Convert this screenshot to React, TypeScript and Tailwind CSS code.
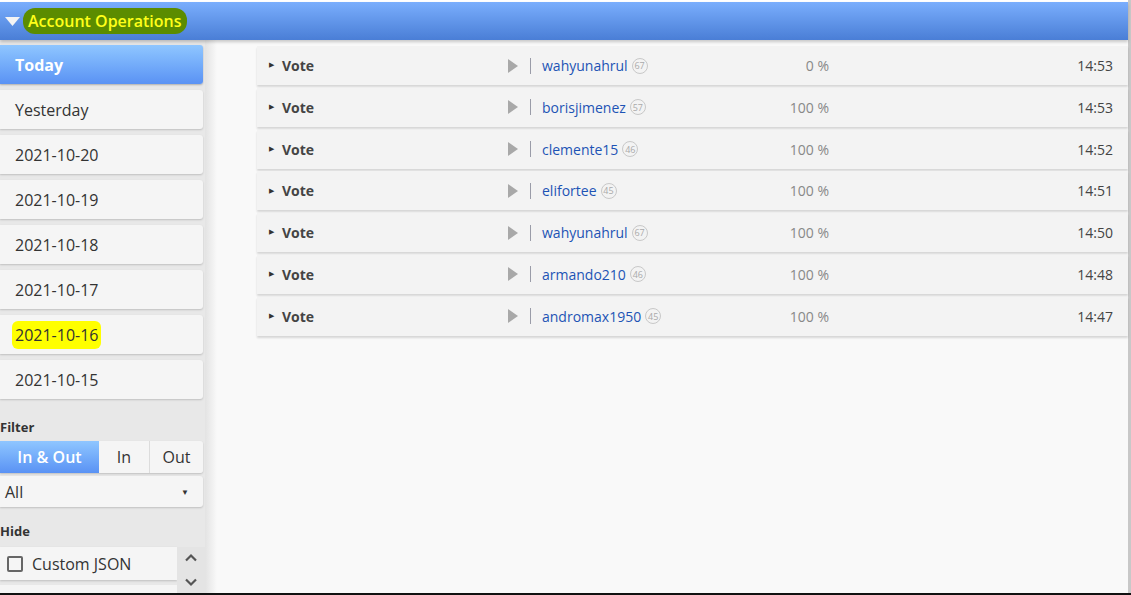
import React from 'react';

const days = ['Today', 'Yesterday', '2021-10-20', '2021-10-19', '2021-10-18', '2021-10-17', '2021-10-16', '2021-10-15'];

const ops = [
  { user: 'wahyunahrul', rep: '67', pct: '0 %', time: '14:53' },
  { user: 'borisjimenez', rep: '57', pct: '100 %', time: '14:53' },
  { user: 'clemente15', rep: '46', pct: '100 %', time: '14:52' },
  { user: 'elifortee', rep: '45', pct: '100 %', time: '14:51' },
  { user: 'wahyunahrul', rep: '67', pct: '100 %', time: '14:50' },
  { user: 'armando210', rep: '46', pct: '100 %', time: '14:48' },
  { user: 'andromax1950', rep: '45', pct: '100 %', time: '14:47' },
];

function Sidebar() {
  return (
    <div className="w-[205px] shrink-0 bg-[#e8e8e8] pt-[5px] flex flex-col overflow-hidden">
      <div className="flex flex-col gap-[6px] w-[203px] shrink-0">
        {days.map((d, i) =>
          i === 0 ? (
            <div
              key={d}
              className="h-[39px] flex items-center pl-[15px] rounded-r-[3px] bg-gradient-to-b from-[#8fc6ff] to-[#5a92f4] text-white font-bold text-[16px] shadow-[0_1px_2px_rgba(0,0,0,0.25)]"
            >
              {d}
            </div>
          ) : (
            <div
              key={d}
              className="h-[39px] flex items-center pl-[15px] rounded-r-[3px] bg-[#f5f5f5] text-[#333] text-[16px] shadow-[0_1px_2px_rgba(0,0,0,0.18)]"
            >
              {d === '2021-10-16' ? (
                <span className="bg-[#ffff00] -ml-[3px] px-[3px] py-[2px] rounded-[6px]">{d}</span>
              ) : (
                d
              )}
            </div>
          )
        )}
      </div>

      <div className="shrink-0 mt-[22px] text-[13px] font-bold text-[#333] leading-none">Filter</div>
      <div className="shrink-0 mt-[7px] flex h-[32px] w-[203px] rounded-r-[3px] overflow-hidden shadow-[0_1px_2px_rgba(0,0,0,0.18)] text-[16px]">
        <div className="w-[99px] flex items-center justify-center bg-gradient-to-b from-[#8fc6ff] to-[#5a92f4] text-white font-semibold">
          In &amp; Out
        </div>
        <div className="w-[51px] flex items-center justify-center bg-[#f5f5f5] text-[#333] border-r border-[#dcdcdc]">In</div>
        <div className="flex-1 flex items-center justify-center bg-[#f5f5f5] text-[#333]">Out</div>
      </div>
      <div className="shrink-0 mt-[3px] h-[31px] w-[203px] flex items-center justify-between pl-[5px] pr-[14px] bg-[#f5f5f5] rounded-r-[3px] shadow-[0_1px_2px_rgba(0,0,0,0.18)] text-[16px] text-[#333]">
        <span>All</span>
        <span className="text-[8px]">▼</span>
      </div>

      <div className="shrink-0 mt-[18px] text-[13px] font-bold text-[#333] leading-none">Hide</div>
      <div className="shrink-0 mt-[9px] flex">
        <div className="w-[177px] flex flex-col gap-[5px]">
          <div className="h-[33px] flex items-center pl-[7px] bg-[#f5f5f5] shadow-[0_1px_2px_rgba(0,0,0,0.18)] text-[16px] text-[#333]">
            <span className="w-[16px] h-[16px] border-2 border-[#666] rounded-[2px] mr-[9px]" />
            Custom JSON
          </div>
          <div className="h-[33px] bg-[#f5f5f5]" />
        </div>
        <div className="w-[28px] h-[46px] bg-[#e4e4e4] flex flex-col items-center justify-between py-[6px]">
          <svg width="14" height="9" viewBox="0 0 14 9" fill="none" stroke="#555" strokeWidth="2.2">
            <path d="M2 7.5 L7 2.5 L12 7.5" />
          </svg>
          <svg width="14" height="9" viewBox="0 0 14 9" fill="none" stroke="#555" strokeWidth="2.2">
            <path d="M2 1.5 L7 6.5 L12 1.5" />
          </svg>
        </div>
      </div>
    </div>
  );
}

function OpRow({ op }: { op: (typeof ops)[number] }) {
  return (
    <div className="h-[39px] shrink-0 flex items-center bg-[#f3f3f3] shadow-[0_2px_2px_rgba(0,0,0,0.14)] text-[14px]">
      <span className="ml-[12px] text-[7px] text-[#333]">▶</span>
      <span className="ml-[8px] w-[226px] font-bold text-[#444]">Vote</span>
      <svg width="10" height="14" viewBox="0 0 10 14">
        <path d="M0 0 L10 7 L0 14 Z" fill="#a8a8a8" />
      </svg>
      <span className="ml-[12px] w-[1px] h-[16px] bg-[#9a9ca8]" />
      <span className="ml-[11px] text-[#1d53b5]">{op.user}</span>
      <span className="ml-[4px] w-[16px] h-[16px] rounded-full border border-[#c8c8c8] text-[9px] text-[#aaa] flex items-center justify-center leading-none">
        {op.rep}
      </span>
      <span className="flex-1" />
      <span className="w-[60px] text-right text-[#888]">{op.pct}</span>
      <span className="w-[299px] text-right text-[#444] pr-[15px]">{op.time}</span>
    </div>
  );
}

export default function App() {
  return (
    <div
      className="w-[1131px] h-[595px] bg-white overflow-hidden flex flex-col border-b-2 border-[#111]"
      style={{ fontFamily: '"Open Sans", "Noto Sans", sans-serif' }}
    >
      <div className="flex-1 flex flex-col pt-[2px] border-r-[3px] border-[#c8c8c8] min-h-0">
        <div className="h-[38px] shrink-0 flex items-center bg-gradient-to-b from-[#7aaefd] to-[#4a7ed6] shadow-[0_2px_3px_rgba(0,0,0,0.2)] relative z-10">
          <svg className="ml-[5px]" width="15" height="9" viewBox="0 0 15 9">
            <path d="M0 0 L15 0 L7.5 9 Z" fill="#f4f4f4" />
          </svg>
          <span className="ml-[3px] px-[5px] py-[3px] rounded-[12px] bg-[#5b8c00] text-[#ffff1a] font-semibold text-[16px] leading-tight">
            Account Operations
          </span>
        </div>
        <div className="flex-1 flex min-h-0 bg-[#f9f9f9]">
          <Sidebar />
          <div className="w-[12px] shrink-0 bg-gradient-to-r from-[#e3e3e3] to-[#f9f9f9]" />
          <div className="flex-1 pt-[6px] pl-[40px] flex flex-col gap-[2.8px]">
            {ops.map((op, i) => (
              <OpRow key={i} op={op} />
            ))}
          </div>
        </div>
      </div>
    </div>
  );
}
